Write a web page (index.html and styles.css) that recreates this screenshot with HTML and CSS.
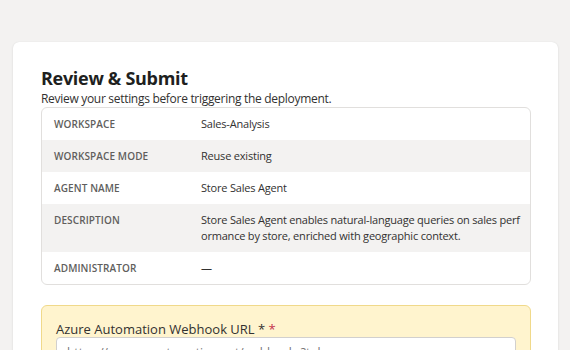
FILE: index.html
```html
<!DOCTYPE html>
<html lang="en">
<head>
  <meta charset="UTF-8" />
  <title>Review &amp; Submit</title>
  <link rel="stylesheet" href="styles.css">
</head>
<body>
  <div class="card">
    <h2>Review &amp; Submit</h2>
    <p class="sub">Review your settings before triggering the deployment.</p>

    <div class="summary">
      <div class="row">
        <div class="key">Workspace</div>
        <div class="val">Sales-Analysis</div>
      </div>
      <div class="row alt">
        <div class="key">Workspace mode</div>
        <div class="val">Reuse existing</div>
      </div>
      <div class="row">
        <div class="key">Agent name</div>
        <div class="val">Store Sales Agent</div>
      </div>
      <div class="row alt">
        <div class="key">Description</div>
        <div class="val">Store Sales Agent enables natural-language queries on sales performance by store, enriched with geographic context.</div>
      </div>
      <div class="row">
        <div class="key">Administrator</div>
        <div class="val">—</div>
      </div>
    </div>

    <div class="webhook">
      <label for="hook">Azure Automation Webhook URL * <span class="req">*</span></label>
      <input id="hook" type="text" placeholder="https://...azure-automation.net/webhooks?token=...">
    </div>
  </div>
</body>
</html>
```

FILE: styles.css
```css
body {
  font-family: "Open Sans", "Noto Sans", sans-serif;
  background-color: #f3f2f1;
  color: #323130;
  margin: 0;
  padding: 42px 12px 0 13px;
}
.card {
  background-color: #fff;
  border-radius: 6px;
  box-shadow: 0 1px 3px rgba(0, 0, 0, 0.08), 0 0 1px rgba(0, 0, 0, 0.1);
  padding: 24px 27px 40px 28px;
}
h2 {
  margin: 0;
  font-size: 18px;
  line-height: 24px;
  letter-spacing: -0.3px;
  color: #201f1e;
  font-weight: 700;
}
.sub {
  margin: 0;
  font-size: 12px;
  line-height: 17px;
  letter-spacing: -0.3px;
  color: #323130;
}
.summary {
  border: 1px solid #e1dfdd;
  border-radius: 6px;
  overflow: hidden;
}
.row {
  display: grid;
  grid-template-columns: 147px 1fr;
  font-size: 11px;
  line-height: 16px;
  letter-spacing: -0.2px;
}
.row.alt {
  background-color: #f3f2f1;
}
.key, .val {
  padding: 8px 12px;
}
.key {
  text-transform: uppercase;
  font-weight: 600;
  color: #605e5c;
  font-size: 10px;
  letter-spacing: 0.1px;
}
.val {
  word-break: break-all;
  padding-right: 8px;
}
.webhook {
  margin-top: 20px;
  background-color: #fff4ce;
  border: 1px solid #f0d98a;
  border-radius: 6px;
  padding: 15px 14px 14px 14px;
}
.webhook label {
  display: block;
  font-size: 13px;
  line-height: 16px;
  color: #323130;
  margin-bottom: 0;
}
.req {
  color: #c4314b;
}
.webhook input {
  box-sizing: border-box;
  width: 100%;
  height: 30px;
  border: 1px solid #d2d0ce;
  border-radius: 4px;
  padding: 0 10px;
  font-family: inherit;
  font-size: 12px;
  background-color: #fff;
}
```
